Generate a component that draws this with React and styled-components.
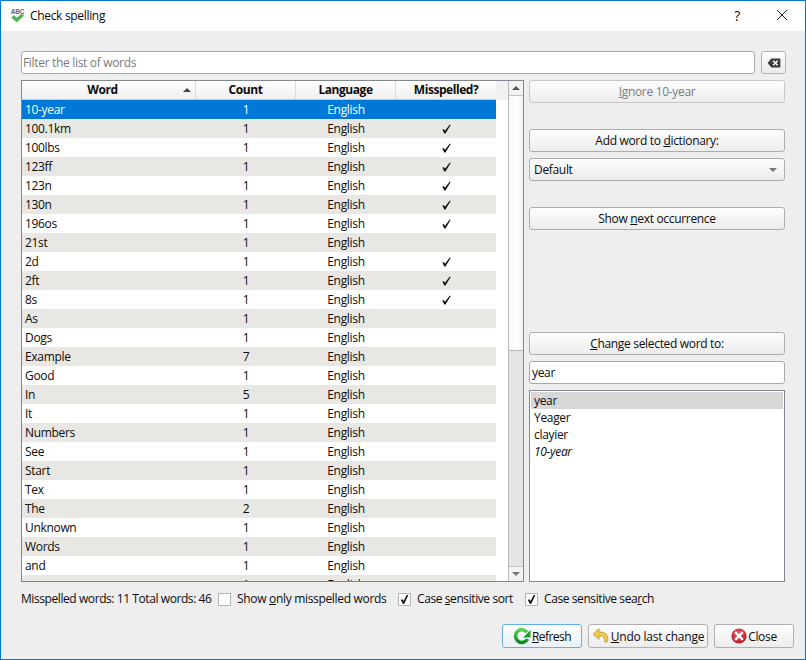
import React from "react";
import styled, { createGlobalStyle } from "styled-components";

const Global = createGlobalStyle`
  html, body { margin: 0; padding: 0; background: #eeeeee; }
  * { box-sizing: border-box; }
`;

const FONT = `"Open Sans", "Noto Sans", "Liberation Sans", sans-serif`;

const Window = styled.div`
  width: 806px; height: 660px;
  border: 1px solid #0078d7;
  background: #eeeeee;
  display: flex; flex-direction: column;
  font-family: ${FONT};
  font-size: 12px;
  letter-spacing: -0.32px;
  color: #0c0c0c;
  overflow: hidden;
`;
const TitleBar = styled.div`
  height: 30px; flex: none; background: #fff;
  display: flex; align-items: center; padding-left: 9px;
`;
const TitleText = styled.div`
  margin-left: 4px; flex: 1; padding-bottom: 1px;
`;
const TitleBtn = styled.div`
  width: 46px; height: 30px; display: flex; align-items: center; justify-content: center;
  font-size: 14px;
  padding: 0 0 2px ${p => (p.$help ? 2 : 0)}px;
`;
const Content = styled.div`
  flex: 1; display: flex; flex-direction: column;
  padding: 20px 19px 0 20px;
  min-height: 0;
`;
const FilterRow = styled.div`
  display: flex; gap: 6px; height: 23px; flex: none;
`;
const TextBox = styled.div`
  flex: ${p => (p.$grow ? 1 : "none")};
  height: 23px;
  background: #fff;
  border: 1px solid #a9a9a9;
  border-radius: 3px;
  padding: 0 1px;
  line-height: 21px;
  color: ${p => (p.$placeholder ? "#7a7a7a" : "inherit")};
`;
const ClearBtn = styled.div`
  width: 25px; height: 23px; flex: none;
  border: 1px solid #b4b4b4; border-radius: 3px;
  background: linear-gradient(#fdfdfd, #ececec);
  display: flex; align-items: center; justify-content: center;
`;
const Main = styled.div`
  margin-top: 6px;
  display: grid; grid-template-columns: 503px 256px; gap: 5px;
  height: 502px; flex: none;
`;
const TableFrame = styled.div`
  border: 1px solid #828790;
  display: flex; min-height: 0; background: #fff; overflow: hidden;
`;
const Table = styled.div`
  flex: 1; min-width: 0; display: flex; flex-direction: column; overflow: hidden;
`;
const HeaderRow = styled.div`
  display: grid; grid-template-columns: 174px 100px 100px 100px 1fr;
  height: 19px; flex: none;
`;
const HeaderCell = styled.div`
  position: relative;
  text-align: center; font-weight: 700; line-height: 18px; letter-spacing: -0.45px;
  padding-right: ${p => p.$pr || 0}px;
  background: linear-gradient(#ffffff, #efefef);
  border-right: ${p => (p.$last ? "none" : "1px solid #dadada")};
  border-bottom: 1px solid #c8c8c8;
`;
const HeaderFill = styled.div`
  background: #f1f1f1;
`;
const SortArrow = styled.div`
  position: absolute; right: 4px; top: 7px;
  width: 0; height: 0;
  border-left: 4px solid transparent; border-right: 4px solid transparent;
  border-bottom: 4px solid #444;
`;
const Row = styled.div`
  display: grid; grid-template-columns: 174px 100px 100px 100px;
  width: 474px;
  height: 19px; flex: none;
  line-height: 19px;
  background: ${p => (p.$selected ? "#0078d7" : p.$alt ? "#e9e7e3" : "#fff")};
  color: ${p => (p.$selected ? "#fff" : "inherit")};
`;
const WordCell = styled.div`
  padding-left: 3px;
`;
const TextCell = styled.div`
  text-align: center;
`;
const CheckCell = styled.div`
  height: 19px; display: flex; align-items: center; justify-content: center;
`;
const Scrollbar = styled.div`
  width: 15px; flex: none; display: flex; flex-direction: column;
  border-left: 1px solid #b9b9b9;
  background: #e4e4e4;
`;
const ScrollButton = styled.div`
  height: 15px; flex: none; background: #f2f2f2;
  display: flex; align-items: center; justify-content: center;
  border-${p => (p.$up ? "bottom" : "top")}: 1px solid #c4c4c4;
`;
const ScrollThumb = styled.div`
  height: 255px; flex: none;
  background: linear-gradient(90deg, #f9f9f9, #ffffff 60%, #f0f0f0);
  border-bottom: 1px solid #b9b9b9;
`;
const ScrollTrack = styled.div`
  flex: 1;
`;
const Tri = styled.div`
  width: 0; height: 0;
  border-left: 4px solid transparent; border-right: 4px solid transparent;
  ${p => (p.$up ? "border-bottom: 4px solid #555;" : "border-top: 4px solid #777;")}
`;
const Side = styled.div`
  display: flex; flex-direction: column; min-height: 0;
`;
const Button = styled.div`
  height: 23px; flex: none;
  border: 1px solid ${p => (p.$disabled ? "#c8c8c8" : "#adadad")};
  border-radius: 3px;
  background: linear-gradient(#fefefe, #ececec);
  color: ${p => (p.$disabled ? "#7c7c7c" : "inherit")};
  display: flex; align-items: center; justify-content: center;
  margin-top: ${p => p.$mt || 0}px;
`;
const Combo = styled(Button)`
  justify-content: space-between;
  padding: 0 7px 0 4px;
`;
const SideInput = styled(TextBox)`
  margin-top: 6px;
  padding-left: 2px;
`;
const ListBox = styled.div`
  margin-top: 6px; flex: 1; min-height: 0;
  background: #fff; border: 1px solid #828790;
  padding: 1px;
`;
const ListItem = styled.div`
  height: 17px; line-height: 17px; padding-left: 3px;
  background: ${p => (p.$selected ? "#d7d7d7" : "transparent")};
  font-style: ${p => (p.$italic ? "italic" : "normal")};
`;
const StatusRow = styled.div`
  display: flex; align-items: center; height: 18px; margin-top: 7px; flex: none; white-space: nowrap;
`;
const StatusText = styled.div`
  width: 197px; flex: none; letter-spacing: -0.42px;
`;
const CheckLabel = styled.div`
  display: flex; align-items: center; gap: 6px;
  width: ${p => p.$w}px; flex: none;
  letter-spacing: ${p => p.$ls || -0.32}px;
`;
const CheckBox = styled.div`
  width: 13px; height: 13px; flex: none; margin-top: 2px;
  background: #fff; border: 1px solid #b5b5b5;
  display: flex; align-items: center; justify-content: center;
`;
const Footer = styled.div`
  display: flex; justify-content: flex-end; gap: 6px;
  margin: 17px -8px 0 0;
`;
const DialogButton = styled.div`
  width: ${p => p.$w}px; height: 24px;
  border: 1px solid ${p => (p.$focus ? "#62b0ea" : "#b0b0b0")};
  border-radius: 3px;
  background: ${p => (p.$focus ? "linear-gradient(#fdfeff, #e8f1f8)" : "linear-gradient(#fefefe, #ececec)")};
  display: flex; align-items: center; justify-content: center; gap: 1px;
  letter-spacing: ${p => p.$ls || -0.32}px;
`;

const AppIcon = () => (
  <svg width="16" height="16" viewBox="0 0 16 16">
    <text x="7.5" y="6" textAnchor="middle" fontSize="6.5" fontWeight="700" fontFamily="Liberation Sans" fill="#666" letterSpacing="-0.2">ABC</text>
    <path d="M1.5 9.5 L4 7.5 L6.8 10 L11.5 6 L14 7.5 L6.8 14 Z" fill="#4fb648" stroke="#3d9a3a" strokeWidth="0.4" />
  </svg>
);
const CloseGlyph = () => (
  <svg width="12" height="12" viewBox="0 0 12 12">
    <path d="M1 1 L11 11 M11 1 L1 11" stroke="#222" strokeWidth="1" fill="none" />
  </svg>
);
const ClearIcon = () => (
  <svg width="14" height="10" viewBox="0 0 15 11">
    <path d="M0.5 5.5 L4.5 0.5 H14.5 V10.5 H4.5 Z" fill="#3c3c3c" />
    <path d="M6.5 3 L11.5 8 M11.5 3 L6.5 8" stroke="#fff" strokeWidth="1.7" />
  </svg>
);
const TableCheck = () => (
  <svg width="9" height="10" viewBox="0 0 11 12">
    <path d="M0.5 7 L2 6 L3.6 8.2 L9.6 0.4 L10.6 1 L4.2 11.4 L2.8 11.4 Z" fill="#111" />
  </svg>
);
const BoxCheck = () => (
  <svg width="9" height="11" viewBox="0 0 10 12">
    <path d="M1 6.6 L2.7 5.6 L4 7.8 L7.6 0.8 L9.2 1.4 L4.6 11 L3.2 11 Z" fill="#111" />
  </svg>
);
const RefreshIcon = () => (
  <svg width="18" height="18" viewBox="0 0 18 18">
    <defs>
      <linearGradient id="rg" x1="0" y1="0" x2="0" y2="1">
        <stop offset="0" stopColor="#5fd05a" />
        <stop offset="1" stopColor="#0c8a1c" />
      </linearGradient>
    </defs>
    <path d="M14 5.2 A6.4 6.4 0 1 0 14.6 12" fill="none" stroke="url(#rg)" strokeWidth="3.6" />
    <path d="M17.5 3 V10.5 H10 Z" fill="#22992c" />
  </svg>
);
const UndoIcon = () => (
  <svg width="18" height="18" viewBox="0 0 18 18">
    <path d="M1 7 L7 1.6 V5 C12.5 4.4 17 7.6 15.6 14 L15 15 L12.6 15 C13.4 10.6 11 8.6 7 9 V12.4 Z" fill="#f2c94c" stroke="#b5892a" strokeWidth="0.7" strokeLinejoin="round" />
  </svg>
);
const CloseIcon = () => (
  <svg width="16" height="16" viewBox="0 0 16 16">
    <defs>
      <radialGradient id="cg" cx="0.45" cy="0.35" r="0.75">
        <stop offset="0" stopColor="#f0616a" />
        <stop offset="1" stopColor="#a80f1c" />
      </radialGradient>
    </defs>
    <circle cx="8" cy="8" r="7.6" fill="url(#cg)" />
    <path d="M5 5 L11 11 M11 5 L5 11" stroke="#fff" strokeWidth="2.4" strokeLinecap="square" />
  </svg>
);

const rows = [
  ["10-year", 1, false], ["100.1km", 1, true], ["100lbs", 1, true], ["123ff", 1, true],
  ["123n", 1, true], ["130n", 1, true], ["196os", 1, true], ["21st", 1, false],
  ["2d", 1, true], ["2ft", 1, true], ["8s", 1, true], ["As", 1, false],
  ["Dogs", 1, false], ["Example", 7, false], ["Good", 1, false], ["In", 5, false],
  ["It", 1, false], ["Numbers", 1, false], ["See", 1, false], ["Start", 1, false],
  ["Tex", 1, false], ["The", 2, false], ["Unknown", 1, false], ["Words", 1, false],
  ["and", 1, false], ["an", 1, false],
];

export default function App() {
  return (
    <>
      <Global />
      <Window>
        <TitleBar>
          <AppIcon />
          <TitleText>Check spelling</TitleText>
          <TitleBtn $help>?</TitleBtn>
          <TitleBtn><CloseGlyph /></TitleBtn>
        </TitleBar>
        <Content>
          <FilterRow>
            <TextBox $grow $placeholder>Filter the list of words</TextBox>
            <ClearBtn><ClearIcon /></ClearBtn>
          </FilterRow>
          <Main>
            <TableFrame>
              <Table>
                <HeaderRow>
                  <HeaderCell $pr={12}>Word<SortArrow /></HeaderCell>
                  <HeaderCell>Count</HeaderCell>
                  <HeaderCell>Language</HeaderCell>
                  <HeaderCell $last>Misspelled?</HeaderCell>
                  <HeaderFill />
                </HeaderRow>
                {rows.map(([word, count, bad], i) => (
                  <Row key={word} $selected={i === 0} $alt={i % 2 === 1}>
                    <WordCell>{word}</WordCell>
                    <TextCell>{count}</TextCell>
                    <TextCell>English</TextCell>
                    <CheckCell>{bad && <TableCheck />}</CheckCell>
                  </Row>
                ))}
              </Table>
              <Scrollbar>
                <ScrollButton $up><Tri $up /></ScrollButton>
                <ScrollThumb />
                <ScrollTrack />
                <ScrollButton><Tri /></ScrollButton>
              </Scrollbar>
            </TableFrame>
            <Side>
              <Button $disabled><span><u>I</u>gnore 10-year</span></Button>
              <Button $mt={26}><span>Add word to <u>d</u>ictionary:</span></Button>
              <Combo $mt={6}><span>Default</span><Tri /></Combo>
              <Button $mt={26}><span>Show <u>n</u>ext occurrence</span></Button>
              <Button $mt={102}><span><u>C</u>hange selected word to:</span></Button>
              <SideInput>year</SideInput>
              <ListBox>
                <ListItem $selected>year</ListItem>
                <ListItem>Yeager</ListItem>
                <ListItem>clayier</ListItem>
                <ListItem $italic>10-year</ListItem>
              </ListBox>
            </Side>
          </Main>
          <StatusRow>
            <StatusText>Misspelled words: 11 Total words: 46</StatusText>
            <CheckLabel $w={180}><CheckBox /><span>Show <u>o</u>nly misspelled words</span></CheckLabel>
            <CheckLabel $w={127} $ls={-0.41}><CheckBox><BoxCheck /></CheckBox><span>Case <u>s</u>ensitive sort</span></CheckLabel>
            <CheckLabel $w={140} $ls={-0.41}><CheckBox><BoxCheck /></CheckBox><span>Case sensitive sea<u>r</u>ch</span></CheckLabel>
          </StatusRow>
          <Footer>
            <DialogButton $w={80} $focus $ls={-0.55}><RefreshIcon /><span><u>R</u>efresh</span></DialogButton>
            <DialogButton $w={120} $ls={-0.22}><UndoIcon /><span><u>U</u>ndo last change</span></DialogButton>
            <DialogButton $w={80}><CloseIcon /><span>Close</span></DialogButton>
          </Footer>
        </Content>
      </Window>
    </>
  );
}
